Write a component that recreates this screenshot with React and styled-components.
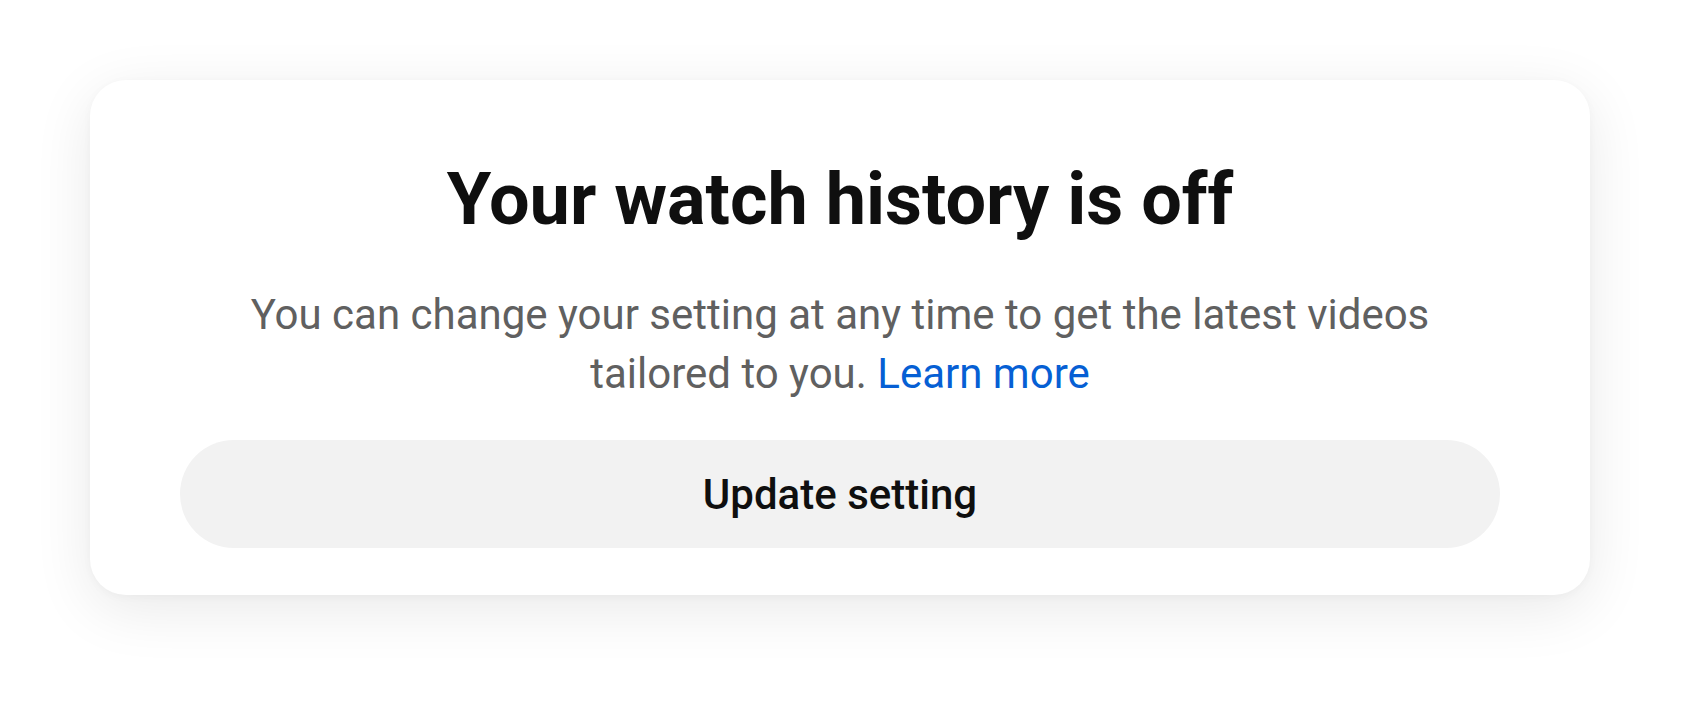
import React from "react";
import styled, { createGlobalStyle } from "styled-components";

const GlobalStyle = createGlobalStyle`
  html, body {
    margin: 0;
    padding: 0;
    background: #ffffff;
  }
  body {
    font-family: Roboto, "Noto Sans", Arial, sans-serif;
    -webkit-font-smoothing: antialiased;
  }
`;

const Page = styled.div`
  width: 1708px;
  height: 706px;
  box-sizing: border-box;
  padding: 80px 0 0 90px;
`;

const Card = styled.section`
  width: 1500px;
  height: 515px;
  box-sizing: border-box;
  padding: 72px 90px 47px;
  background: #ffffff;
  border-radius: 36px;
  box-shadow: 0 14px 60px rgba(0, 0, 0, 0.09), 0 2px 10px rgba(0, 0, 0, 0.03);
  display: flex;
  flex-direction: column;
  align-items: stretch;
  text-align: center;
`;

const Title = styled.h1`
  margin: 0;
  font-size: 72px;
  line-height: 96px;
  font-weight: 700;
  color: #0f0f0f;
`;

const Message = styled.p`
  margin: 37px 0 0;
  font-size: 42px;
  line-height: 59px;
  font-weight: 400;
  color: #606060;
`;

const LearnMore = styled.a`
  color: #065fd4;
  text-decoration: none;
`;

const ActionButton = styled.button`
  margin-top: auto;
  height: 108px;
  border: none;
  border-radius: 54px;
  background: #f2f2f2;
  font-family: inherit;
  font-size: 42px;
  font-weight: 500;
  color: #0f0f0f;
  cursor: pointer;
`;

export default function App() {
  return (
    <>
      <GlobalStyle />
      <Page>
        <Card>
          <Title>Your watch history is off</Title>
          <Message>
            You can change your setting at any time to get the latest videos
            tailored to you. <LearnMore href="#">Learn more</LearnMore>
          </Message>
          <ActionButton>Update setting</ActionButton>
        </Card>
      </Page>
    </>
  );
}
